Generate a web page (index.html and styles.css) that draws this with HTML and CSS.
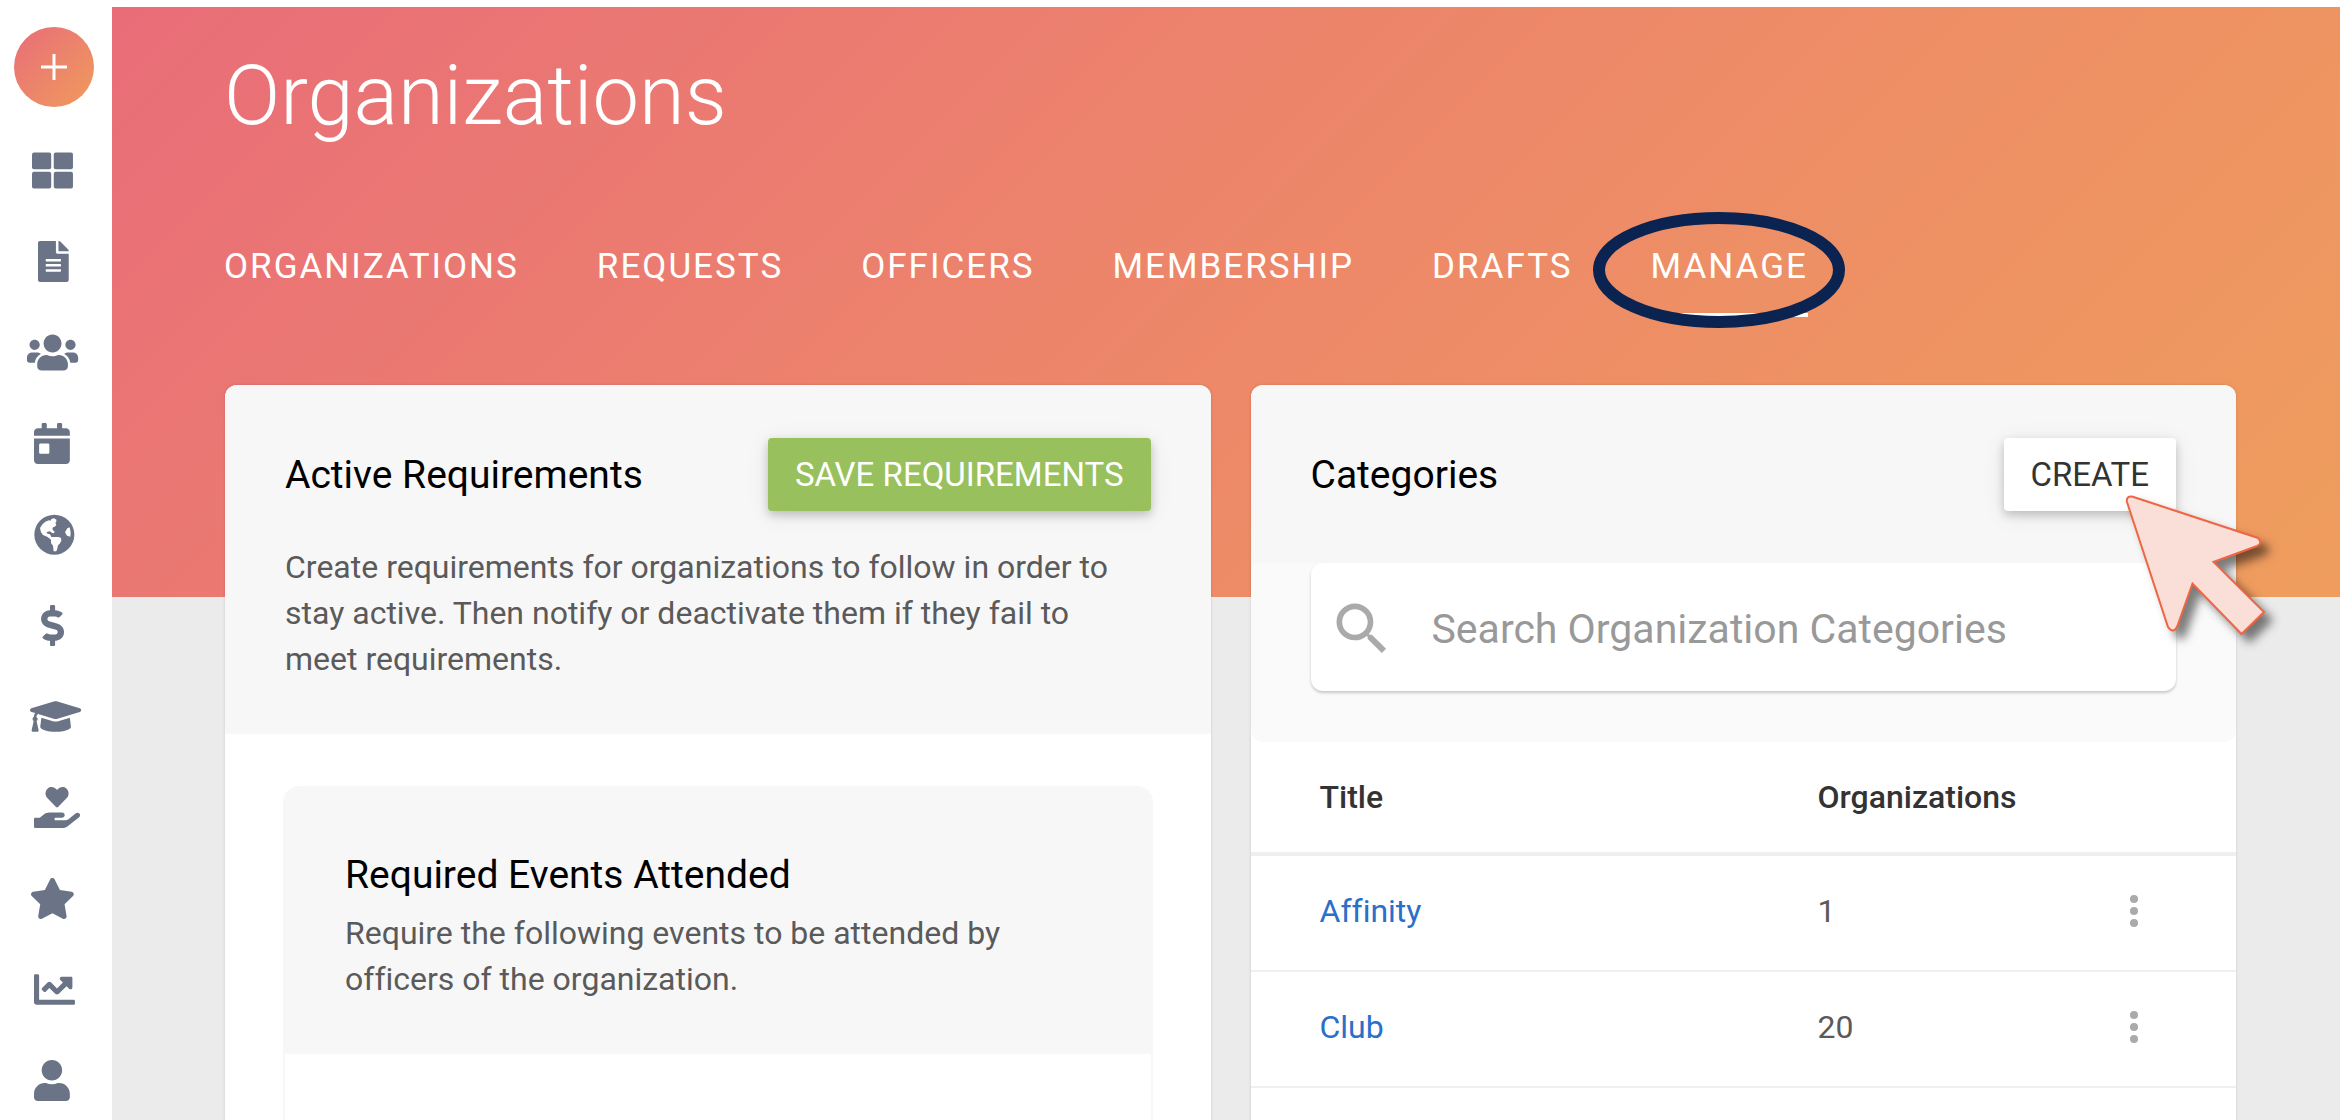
FILE: index.html
```html
<!DOCTYPE html>
<html lang="en">
<head>
    <meta charset="UTF-8">
    <meta name="viewport" content="width=device-width, initial-scale=1.0">
    <title>Organizations</title>
    <link rel="stylesheet" href="styles.css">
</head>
<body>
    <nav class="sidebar" aria-label="Main">
        <button class="add-button" aria-label="Add">
            <svg viewBox="0 0 26 26"><path d="M13 0v26M0 13h26"/></svg>
        </button>
        <a href="#" aria-label="Dashboard">
            <svg viewBox="-75 0 700 512"><rect x="0" y="32" width="240" height="208" rx="24"/><rect x="272" y="32" width="240" height="208" rx="24"/><rect x="0" y="272" width="240" height="208" rx="24"/><rect x="272" y="272" width="240" height="208" rx="24"/></svg>
        </a>
        <a href="#" aria-label="Forms">
            <svg viewBox="-150 0 700 512"><path d="M224 136V0H24C10.700 0 0 10.700 0 24v464c0 13.300 10.700 24 24 24h336c13.300 0 24-10.700 24-24V160H248c-13.200 0-24-10.800-24-24zm64 236c0 6.600-5.400 12-12 12H108c-6.600 0-12-5.400-12-12v-8c0-6.600 5.400-12 12-12h168c6.600 0 12 5.400 12 12v8zm0-64c0 6.600-5.400 12-12 12H108c-6.600 0-12-5.400-12-12v-8c0-6.600 5.400-12 12-12h168c6.600 0 12 5.400 12 12v8zm0-72v8c0 6.600-5.400 12-12 12H108c-6.600 0-12-5.400-12-12v-8c0-6.600 5.400-12 12-12h168c6.600 0 12 5.400 12 12zm96-114.100v6.100H256V0h6.100c6.400 0 12.500 2.500 17 7l97.900 98c4.500 4.500 7 10.600 7 16.900z"/></svg>
        </a>
        <a href="#" aria-label="Organizations">
            <svg viewBox="-12 0 700 512"><path d="M96 224c35.300 0 64-28.700 64-64s-28.700-64-64-64-64 28.700-64 64 28.700 64 64 64zm448 0c35.300 0 64-28.700 64-64s-28.700-64-64-64-64 28.700-64 64 28.700 64 64 64zm32 32h-64c-17.600 0-33.500 7.100-45.100 18.600 40.300 22.100 68.900 62 75.100 109.400h66c17.700 0 32-14.300 32-32v-32c0-35.300-28.700-64-64-64zm-256 0c61.900 0 112-50.100 112-112S381.900 32 320 32 208 82.100 208 144s50.100 112 112 112zm76.800 32h-8.300c-20.800 10-43.900 16-68.500 16s-47.600-6-68.500-16h-8.300C179.600 288 128 339.600 128 403.200V432c0 26.500 21.500 48 48 48h288c26.500 0 48-21.500 48-48v-28.800c0-63.600-51.600-115.200-115.200-115.200zm-223.700-13.400C161.500 263.100 145.600 256 128 256H64c-35.300 0-64 28.700-64 64v32c0 17.700 14.300 32 32 32h65.900c6.300-47.400 34.900-87.300 75.200-109.400z"/></svg>
        </a>
        <a href="#" aria-label="Events">
            <svg viewBox="-100 0 700 512"><path d="M0 464c0 26.500 21.500 48 48 48h352c26.500 0 48-21.500 48-48V192H0v272zm64-192c0-8.800 7.200-16 16-16h96c8.800 0 16 7.200 16 16v96c0 8.800-7.200 16-16 16H80c-8.800 0-16-7.200-16-16v-96zM400 64h-48V16c0-8.800-7.200-16-16-16h-32c-8.800 0-16 7.200-16 16v48H160V16c0-8.800-7.200-16-16-16h-32c-8.800 0-16 7.200-16 16v48H48C21.500 64 0 85.500 0 112v48h448v-48c0-26.500-21.500-48-48-48z"/></svg>
        </a>
        <a href="#" aria-label="Website">
            <svg viewBox="78 342 168 123">
                <circle cx="163" cy="404" r="60"/>
                <path class="land" d="M120 384l8-12 8-7 11-4 5 1 2-5 8-2 7 4v6l-3 4 3 6-5 5-5 2-2 5 3 5 4 2-2 6-7-2-5-4-7 1-4 3 4 3 7 2 4 8h22l7 3 1 8-5 9-5 5-3 14-3 4h-7l-2-17-6-8v-10l-10-8-14-6-6-8z"/>
                <path class="land" d="M209 382l-7 3-7 12 6 10 10 3 1-12z"/>
            </svg>
        </a>
        <a href="#" aria-label="Finance">
            <svg viewBox="-188 0 700 512"><path d="M209.200 233.400l-108-31.600C88.700 198.200 80 186.500 80 173.500c0-16.300 13.200-29.500 29.500-29.500h66.300c12.200 0 24.200 3.700 34.200 10.500 6.100 4.100 14.300 3.100 19.500-2l34.800-34c7.100-6.900 6.100-18.400-1.800-24.500C238 74.800 207.400 64.100 176 64V16c0-8.800-7.200-16-16-16h-32c-8.800 0-16 7.200-16 16v48h-2.500C45.800 64-5.400 118.700.5 183.600c4.200 46.100 39.400 83.600 83.800 96.600l102.500 30c12.500 3.700 21.200 15.300 21.200 28.300 0 16.300-13.200 29.500-29.500 29.500h-66.300C100 368 88 364.300 78 357.500c-6.100-4.100-14.300-3.100-19.500 2l-34.800 34c-7.100 6.900-6.100 18.400 1.800 24.500 24.500 19.200 55.100 29.900 86.500 30v48c0 8.800 7.200 16 16 16h32c8.800 0 16-7.200 16-16v-48.200c46.600-.9 90.300-28.600 105.700-72.700 21.500-61.600-14.600-124.800-72.500-141.700z"/></svg>
        </a>
        <a href="#" aria-label="Curriculum">
            <svg viewBox="-50 0 700 512"><path d="M622.340 153.200L343.400 67.500c-15.200-4.670-31.600-4.670-46.790 0L17.660 153.200c-23.540 7.230-23.540 38.360 0 45.590l48.630 14.940c-10.670 13.190-17.230 29.280-17.880 46.900C38.780 266.150 32 276.110 32 288c0 10.780 5.680 19.850 13.860 25.650L20.330 428.530C18.110 438.520 25.710 448 35.940 448h56.110c10.240 0 17.840-9.480 15.620-19.470L82.140 313.650C90.320 307.850 96 298.780 96 288c0-11.570-6.470-21.250-15.660-26.870.76-15.020 8.440-28.300 20.690-36.720L296.600 284.500c9.060 2.780 26.440 6.250 46.790 0l278.950-85.700c23.550-7.240 23.550-38.360 0-45.600zM352.790 315.090c-28.530 8.760-52.840 3.920-65.590 0l-145.020-44.550L128 384c0 35.350 85.960 64 192 64s192-28.650 192-64l-14.180-113.470-145.030 44.560z"/></svg>
        </a>
        <a href="#" aria-label="Service">
            <svg viewBox="-100 0 700 512"><path d="M275.300 250.500c7 7.400 18.400 7.400 25.500 0l108.900-114.200c31.600-33.200 29.800-88.200-5.600-118.800-30.800-26.700-76.700-21.900-104.900 7.700L288 36.900l-11.100-11.600C248.700-4.400 202.800-9.200 172 17.500c-35.300 30.600-37.200 85.600-5.600 118.800l108.900 114.200zm290 77.600c-11.800-10.700-30.200-10-42.600 0L430.300 402c-11.300 9.100-25.400 14-40 14H272c-8.800 0-16-7.200-16-16s7.200-16 16-16h78.300c15.900 0 30.700-10.900 33.300-26.600 3.300-20-12.100-37.400-31.600-37.400H192c-27 0-53.100 9.300-74.100 26.300L71.400 384H16c-8.800 0-16 7.200-16 16v96c0 8.800 7.200 16 16 16h356.800c14.500 0 28.600-4.900 40-14L564 377c15.200-12.100 16.400-35.300 1.300-48.900z"/></svg>
        </a>
        <a href="#" aria-label="Favorites">
            <svg viewBox="-42 0 700 512"><path d="M259.300 17.800L194 150.200 47.900 171.500c-26.200 3.800-36.700 36.100-17.700 54.600l105.700 103-25 145.500c-4.500 26.300 23.200 46 46.400 33.700L288 439.600l130.700 68.700c23.200 12.200 50.900-7.400 46.400-33.700l-25-145.500 105.700-103c19-18.500 8.500-50.800-17.700-54.600L382 150.200 316.700 17.800c-11.700-23.600-45.600-23.900-57.400 0z"/></svg>
        </a>
        <a href="#" aria-label="Reports">
            <svg viewBox="-100 0 700 512"><path d="M496 384H64V80c0-8.840-7.160-16-16-16H16C7.160 64 0 71.160 0 80v336c0 17.670 14.330 32 32 32h464c8.840 0 16-7.160 16-16v-32c0-8.840-7.160-16-16-16zM464 96H345.940c-21.380 0-32.090 25.850-16.970 40.970l32.400 32.400L288 242.750l-73.370-73.370c-12.500-12.500-32.760-12.500-45.250 0l-68.690 68.690c-6.250 6.250-6.250 16.380 0 22.630l22.620 22.620c6.250 6.250 16.380 6.250 22.630 0L192 237.250l73.370 73.370c12.500 12.500 32.760 12.500 45.250 0l96-96 32.400 32.400c15.120 15.120 40.970 4.410 40.970-16.970V112c.01-8.840-7.150-16-15.990-16z"/></svg>
        </a>
        <a href="#" aria-label="Users">
            <svg viewBox="-100 0 700 512"><path d="M224 256c70.700 0 128-57.300 128-128S294.700 0 224 0 96 57.300 96 128s57.300 128 128 128zm89.600 32h-16.700c-22.200 10.200-46.900 16-72.900 16s-50.600-5.800-72.900-16h-16.700C60.200 288 0 348.200 0 422.400V464c0 26.500 21.500 48 48 48h352c26.500 0 48-21.500 48-48v-41.600c0-74.200-60.200-134.400-134.400-134.400z"/></svg>
        </a>
    </nav>

    <main class="main">
        <header class="hero">
            <h1>Organizations</h1>
            <nav class="tabs" aria-label="Organizations">
                <a href="#">ORGANIZATIONS</a>
                <a href="#">REQUESTS</a>
                <a href="#">OFFICERS</a>
                <a href="#">MEMBERSHIP</a>
                <a href="#">DRAFTS</a>
                <a href="#" class="active">MANAGE
                    <svg class="ring" viewBox="0 0 252 116"><ellipse cx="126" cy="58" rx="120" ry="52"/></svg>
                </a>
            </nav>
        </header>

        <div class="cards">
            <section class="card">
                <div class="card-header">
                    <div class="card-title">
                        <h2>Active Requirements</h2>
                        <button class="btn btn-green">SAVE REQUIREMENTS</button>
                    </div>
                    <p class="description">Create requirements for organizations to follow in order to stay active. Then notify or deactivate them if they fail to meet requirements.</p>
                </div>
                <div class="card-body">
                    <div class="requirement">
                        <div class="requirement-header">
                            <h3>Required Events Attended</h3>
                            <p>Require the following events to be attended by officers of the organization.</p>
                        </div>
                    </div>
                </div>
            </section>

            <section class="card">
                <div class="card-header">
                    <div class="card-title">
                        <h2>Categories</h2>
                        <div class="create">
                            <button class="btn">CREATE</button>
                            <svg class="pointer" viewBox="0 0 160 160"><path d="M12 6.500L138 48q5 5-1 8L93.500 72 144 122l-22.500 22L72.500 93.500 57 137q-4 7-9 0L7 12q-1-6 5-5.500z"/></svg>
                        </div>
                    </div>
                </div>
                <div class="search-area">
                    <label class="search">
                        <svg viewBox="0 0 24 24"><path d="M15.500 14h-.79l-.28-.27A6.470 6.470 0 0 0 16 9.500 6.500 6.500 0 1 0 9.500 16c1.610 0 3.090-.59 4.230-1.570l.27.28v.79l5 4.990L20.490 19l-4.990-5zm-6 0C7.010 14 5 11.990 5 9.500S7.010 5 9.500 5 14 7.010 14 9.500 11.990 14 9.500 14z"/></svg>
                        <input type="text" placeholder="Search Organization Categories" aria-label="Search Organization Categories">
                    </label>
                </div>
                <table class="categories">
                    <thead>
                        <tr>
                            <th class="col-title">Title</th>
                            <th>Organizations</th>
                            <th class="col-menu"></th>
                        </tr>
                    </thead>
                    <tbody>
                        <tr>
                            <td><a href="#">Affinity</a></td>
                            <td>1</td>
                            <td><button class="menu" aria-label="Affinity options"><svg viewBox="0 0 8 32"><circle cx="4" cy="4" r="4"/><circle cx="4" cy="16" r="4"/><circle cx="4" cy="28" r="4"/></svg></button></td>
                        </tr>
                        <tr>
                            <td><a href="#">Club</a></td>
                            <td>20</td>
                            <td><button class="menu" aria-label="Club options"><svg viewBox="0 0 8 32"><circle cx="4" cy="4" r="4"/><circle cx="4" cy="16" r="4"/><circle cx="4" cy="28" r="4"/></svg></button></td>
                        </tr>
                    </tbody>
                </table>
            </section>
        </div>
    </main>
</body>
</html>
```
FILE: styles.css
```css
* {
    box-sizing: border-box;
}

html {
    height: 100%;
    overflow: hidden;
}

body {
    margin: 0;
    padding-top: 7px;
    height: 100%;
    display: flex;
    overflow: hidden;
    background-color: white;
    color: #5a5a5a;
    font-family: Roboto, sans-serif;
    font-size: 32px;
    line-height: 46px;
    font-variant-ligatures: none;
}

h1, h2, h3, p {
    margin: 0;
}

h2, h3 {
    color: black;
    font-size: 39px;
    font-weight: 400;
}

a {
    text-decoration: none;
}

button {
    border: none;
    font: inherit;
    cursor: pointer;
}

svg {
    display: block;
}

/* Sidebar */
.sidebar {
    flex: none;
    width: 112px;
    padding: 20px 5px 0 0;
    display: flex;
    flex-direction: column;
    align-items: center;
    overflow: hidden;
}

.sidebar a {
    flex: none;
    height: 91px;
    display: flex;
    align-items: center;
}

.sidebar a svg {
    width: 56px;
    height: 41px;
    fill: #6b7487;
}

.sidebar .land {
    fill: white;
}

.add-button {
    flex: none;
    width: 80px;
    height: 80px;
    margin-bottom: 18px;
    padding: 0;
    display: flex;
    align-items: center;
    justify-content: center;
    border-radius: 50%;
    background: linear-gradient(135deg, #e96d79, #ef9b5c);
}

.add-button svg {
    width: 26px;
    height: 26px;
    stroke: white;
    stroke-width: 3;
}

/* Header */
.main {
    flex: 1;
    min-width: 0;
    display: flex;
    flex-direction: column;
    overflow: hidden;
    background-color: #ebebeb;
}

.hero {
    padding: 41px 112px 280px;
    background: linear-gradient(135deg, #e96d79, #ed8769 50%, #ef9d5d);
    color: white;
}

.hero h1 {
    font-size: 83px;
    font-weight: 300;
    line-height: 96px;
}

.tabs {
    margin-top: 100px;
    display: flex;
    gap: 78px;
}

.tabs a {
    padding-bottom: 23px;
    border-bottom: 4px solid transparent;
    color: white;
    font-size: 35px;
    letter-spacing: 2px;
}

.tabs .active {
    position: relative;
    border-bottom-color: white;
}

.ring {
    position: absolute;
    top: -32px;
    left: -58px;
    width: 252px;
    height: 116px;
    fill: none;
    stroke: #0a2351;
    stroke-width: 12;
}

/* Cards */
.cards {
    flex: 1;
    min-height: 0;
    margin-top: -212px;
    padding: 0 104px 0 113px;
    display: grid;
    grid-template-columns: 1fr 1fr;
    gap: 40px;
}

.card {
    display: flex;
    flex-direction: column;
    border-radius: 12px 12px 0 0;
    background-color: white;
    box-shadow: 0 0 3px rgba(0, 0, 0, 0.15);
}

.card-header {
    padding: 53px 60px 52px;
    border-radius: 12px 12px 0 0;
    background-color: #f7f7f7;
}

.card-title {
    display: flex;
    align-items: center;
    justify-content: space-between;
}

.description {
    margin-top: 33px;
    padding-right: 16px;
}

.btn {
    height: 73px;
    padding: 0 27px;
    border-radius: 4px;
    background-color: white;
    color: #333;
    font-size: 33px;
    box-shadow: 0 4px 10px rgba(0, 0, 0, 0.2), 0 4px 24px rgba(0, 0, 0, 0.08);
}

.btn-green {
    background-color: #98c05d;
    color: white;
}

.create {
    position: relative;
}

.pointer {
    position: absolute;
    z-index: 1;
    top: 52px;
    right: -104px;
    width: 160px;
    height: 160px;
    fill: #fadfd8;
    stroke: #f06543;
    stroke-width: 2;
    filter: drop-shadow(8px 8px 5px rgba(0, 0, 0, 0.5));
}

.card-body {
    flex: 1;
    padding: 52px 58px 0;
    display: flex;
}

.requirement {
    flex: 1;
    border: 2px solid #f7f7f7;
    border-bottom: none;
    border-radius: 16px 16px 0 0;
}

.requirement-header {
    padding: 64px 60px 52px;
    border-radius: 14px 14px 0 0;
    background-color: #f7f7f7;
}

.requirement h3 {
    margin-bottom: 12px;
}

/* Categories */
.search-area {
    padding: 0 60px 51px;
    border-radius: 0 0 12px 12px;
    background-color: #fafafa;
}

.search {
    height: 128px;
    padding: 4px 17px 0;
    display: flex;
    align-items: center;
    gap: 36px;
    border-radius: 12px;
    background-color: white;
    box-shadow: 0 2px 3px rgba(0, 0, 0, 0.2);
}

.search svg {
    flex: none;
    width: 68px;
    height: 68px;
    fill: #aaa;
}

.search input {
    flex: 1;
    min-width: 0;
    padding: 0;
    border: none;
    outline: none;
    background: none;
    color: #333;
    font: inherit;
    font-size: 41px;
}

.search input::placeholder {
    color: #999;
    opacity: 1;
}

.categories {
    width: 100%;
    border-collapse: separate;
    border-spacing: 0;
    table-layout: fixed;
}

.categories th {
    padding: 32px 0;
    border-bottom: 4px solid #efefef;
    color: #333;
    font-weight: 500;
    text-align: left;
}

.categories td {
    padding: 32px 0 36px;
    border-bottom: 2px solid #efefef;
}

.categories th:first-child,
.categories td:first-child {
    padding-left: 69px;
}

.categories .col-title {
    width: 567px;
}

.categories .col-menu {
    width: 122px;
}

.categories a {
    color: #2b6fc8;
}

.menu {
    padding: 7px 16px;
    background: none;
    vertical-align: top;
}

.menu svg {
    width: 8px;
    height: 32px;
    fill: #aaa;
}
```
